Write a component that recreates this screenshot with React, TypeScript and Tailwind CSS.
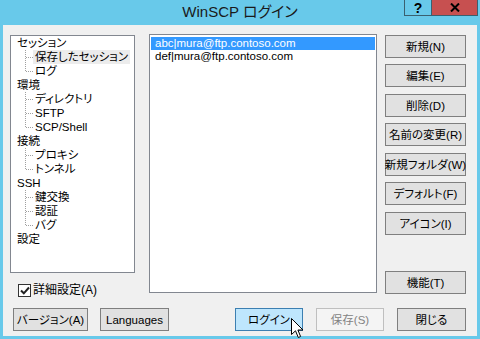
import React from "react";

const font = {
  fontFamily: '"Liberation Sans", "Noto Sans CJK JP", sans-serif',
  fontFeatureSettings: '"palt"',
};

function Btn({ label, cls = "" }: { label: string; cls?: string }) {
  return (
    <div
      className={`h-[23px] flex items-center justify-center border border-[#7f7f7f] bg-[#e1e1e1] text-[11.5px] leading-[14px] text-black whitespace-nowrap ${cls}`}
    >
      {label}
    </div>
  );
}

type Node = { label: string; children?: string[] };
const tree: Node[] = [
  { label: "セッション", children: ["保存したセッション", "ログ"] },
  { label: "環境", children: ["ディレクトリ", "SFTP", "SCP/Shell"] },
  { label: "接続", children: ["プロキシ", "トンネル"] },
  { label: "SSH", children: ["鍵交換", "認証", "バグ"] },
  { label: "設定" },
];

function Connector({ last }: { last: boolean }) {
  return (
    <svg width="8" height="14" className="shrink-0">
      <line x1="0.5" y1="0" x2="0.5" y2={last ? 7 : 14} stroke="#a0a0a0" strokeDasharray="1 1" />
      <line x1="1" y1="7.5" x2="8" y2="7.5" stroke="#a0a0a0" strokeDasharray="1 1" />
    </svg>
  );
}

export default function App() {
  return (
    <div className="w-[480px] h-[339px] bg-[#68c9ea] relative overflow-hidden" style={font}>
      {/* Title bar */}
      <div className="h-[25px] flex items-start relative">
        <div className="flex-1 flex justify-center pt-[3px] text-[15px] leading-[18px] text-[#1a1a1a] whitespace-nowrap">
          WinSCP ログイン
        </div>
        <div className="absolute right-[2px] top-0 flex">
          <div className="w-[28px] h-[16px] border border-[#3a6070] border-t-0 flex items-center justify-center text-[14px] font-bold leading-[14px] text-black">
            ?
          </div>
          <div className="w-[46px] h-[16px] bg-[#c75050] border border-[#3a6070] border-l-0 border-t-0 flex items-center justify-center">
            <svg width="10" height="9" viewBox="0 0 10 9">
              <path d="M1 0.5 L9 8.5 M9 0.5 L1 8.5" stroke="#000" strokeWidth="2" />
            </svg>
          </div>
        </div>
      </div>

      {/* Client area */}
      <div className="mx-[3px] h-[311px] bg-[#f0f0f0] text-[11.5px] text-black">
        <div className="h-[283px] pt-[9px] pl-[7px] flex items-start">
          {/* Left column */}
          <div className="w-[125px] mt-[1px] flex flex-col">
            <div className="h-[238px] border border-[#828790] bg-white pl-[6px] whitespace-nowrap">
              {tree.map((n) => (
                <div key={n.label}>
                  <div className="h-[14px] leading-[14px]">{n.label}</div>
                  {n.children?.map((c, i) => (
                    <div key={c} className="h-[14px] flex items-center pl-[8px]">
                      <Connector last={i === n.children!.length - 1} />
                      <span
                        className={`px-[2px] leading-[14px] ${c === "保存したセッション" ? "bg-[#ececec]" : ""}`}
                      >
                        {c}
                      </span>
                    </div>
                  ))}
                </div>
              ))}
            </div>
            <div className="mt-[10px] ml-[8px] flex items-center whitespace-nowrap">
              <div className="w-[13px] h-[13px] border border-[#333] bg-white flex items-center justify-center">
                <svg width="10" height="9" viewBox="0 0 10 9">
                  <path d="M1 4.5 L3.8 7.3 L9 1.5" stroke="#222" strokeWidth="2" fill="none" />
                </svg>
              </div>
              <span className="ml-[2px] leading-[14px] text-[12px]">詳細設定(A)</span>
            </div>
          </div>

          {/* Session list */}
          <div className="ml-[14px] w-[228px] h-[259px] border border-[#828790] bg-white pt-[2px] px-[1px] whitespace-nowrap">
            <div className="h-[13px] leading-[13px] bg-[#3399ff] text-white pl-[4px]">abc|mura@ftp.contoso.com</div>
            <div className="h-[13px] leading-[13px] pl-[4px]">def|mura@ftp.contoso.com</div>
          </div>

          {/* Buttons */}
          <div className="ml-[8px] w-[81px] h-[260px] flex flex-col">
            <Btn label="新規(N)" cls="mt-[1px]" />
            <Btn label="編集(E)" cls="mt-[6px]" />
            <Btn label="削除(D)" cls="mt-[7px]" />
            <Btn label="名前の変更(R)" cls="mt-[6px]" />
            <Btn label="新規フォルダ(W)" cls="mt-[7px]" />
            <Btn label="デフォルト(F)" cls="mt-[6px]" />
            <Btn label="アイコン(I)" cls="mt-[7px]" />
            <Btn label="機能(T)" cls="mt-auto" />
          </div>
        </div>

        {/* Bottom row */}
        <div className="pl-[10px] flex">
          <Btn label="バージョン(A)" cls="w-[75px]" />
          <Btn label="Languages" cls="w-[69px] ml-[12px]" />
          <div className="ml-[66px] w-[68px] h-[23px] flex items-center justify-center border border-[#3c7fb1] bg-[#bee6fd] text-[11.5px] leading-[14px]">
            ログイン
          </div>
          <div className="ml-[13px] w-[68px] h-[23px] flex items-center justify-center border border-[#bfbfbf] bg-[#f4f4f4] text-[11.5px] leading-[14px] text-[#838383]">
            保存(S)
          </div>
          <Btn label="閉じる" cls="w-[69px] ml-[13px]" />
        </div>
      </div>

      {/* Mouse cursor */}
      <svg className="absolute left-[291px] top-[318px]" width="14" height="22" viewBox="0 0 14 22">
        <path
          d="M0.5 0.5 L0.5 16.5 L4.5 12.8 L7.3 19.5 L9.6 18.5 L6.9 12 L12 12 Z"
          fill="#fff"
          stroke="#000"
          strokeWidth="1"
          strokeLinejoin="miter"
        />
      </svg>
    </div>
  );
}
